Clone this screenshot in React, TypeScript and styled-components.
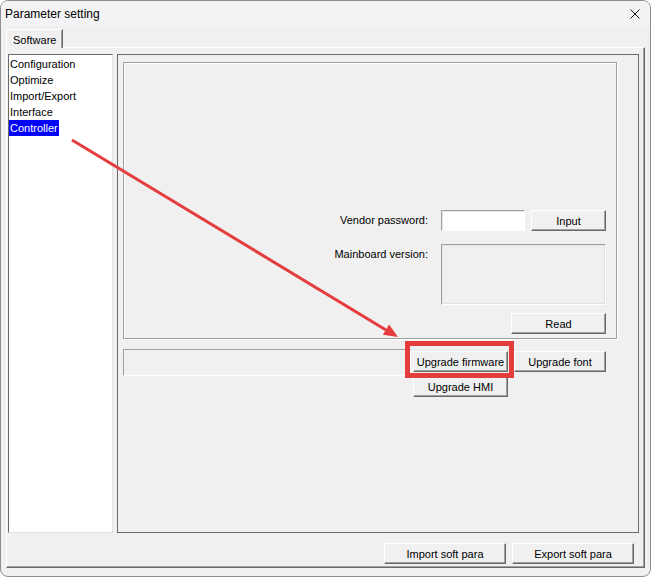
import React from "react";
import styled, { createGlobalStyle } from "styled-components";

const GlobalStyle = createGlobalStyle`
  html, body {
    margin: 0;
    padding: 0;
    background: #ffffff;
  }
  body {
    font-family: "Liberation Sans", Arial, sans-serif;
    font-size: 11px;
    color: #000;
  }
`;

// #region Styled components

const Window = styled.div`
  position: relative;
  width: 651px;
  height: 577px;
  box-sizing: border-box;
  border: 1px solid #8e8e8e;
  border-radius: 8px;
  background: #f0f0f0;
  overflow: hidden;
  display: flex;
  flex-direction: column;
`;

const TitleBar = styled.div`
  flex: none;
  height: 25px;
  background: #f3f3f6;
  display: flex;
  align-items: center;
  justify-content: space-between;
  padding: 0 10px 0 4px;
  font-size: 12px;
`;

const CloseButton = styled.div`
  width: 10px;
  height: 10px;
  display: flex;
`;

const Body = styled.div`
  flex: 1;
  display: flex;
  flex-direction: column;
  padding: 0 5px 8px 5px;
`;

const TabStrip = styled.div`
  flex: none;
  height: 21px;
  display: flex;
  align-items: flex-end;
`;

const Tab = styled.div`
  position: relative;
  z-index: 1;
  height: 19px;
  margin-bottom: -1px;
  box-sizing: border-box;
  padding: 1px 6px 0 6px;
  display: flex;
  align-items: center;
  background: #f0f0f0;
  border-top: 1px solid #fff;
  border-left: 1px solid #fff;
  border-right: 1px solid #696969;
  box-shadow: inset -1px 0 0 #a0a0a0;
`;

const TabPage = styled.div`
  flex: 1;
  display: flex;
  flex-direction: column;
  padding: 6px 5px 3px 1px;
  border-top: 1px solid #fff;
  border-left: 1px solid #fff;
  border-right: 1px solid #696969;
  border-bottom: 1px solid #696969;
  box-shadow: inset -1px -1px 0 #a0a0a0;
`;

const Content = styled.div`
  display: flex;
  gap: 4px;
  height: 479px;
`;

const ListBox = styled.div`
  width: 105px;
  flex: none;
  box-sizing: border-box;
  padding-top: 1px;
  background: #fff;
  border-top: 1px solid #696969;
  border-left: 1px solid #696969;
  border-right: 1px solid #e3e3e3;
  border-bottom: 1px solid #e3e3e3;
`;

const ListRow = styled.div`
  height: 16px;
  line-height: 16px;
`;

const ListText = styled.span<{ $selected?: boolean }>`
  display: inline-block;
  padding: 0 1px;
  background: ${(p) => (p.$selected ? "#0000ff" : "transparent")};
  color: ${(p) => (p.$selected ? "#fff" : "#000")};
`;

const GroupBox = styled.div`
  flex: 1;
  box-sizing: border-box;
  border: 1px solid #696969;
  padding: 7px 21px 0 5px;
  display: flex;
  flex-direction: column;
`;

const Panel = styled.div`
  height: 277px;
  box-sizing: border-box;
  border: 1px solid #a0a0a0;
  box-shadow: 1px 1px 0 #fff, inset 1px 1px 0 #fff;
  display: flex;
  flex-direction: column;
  justify-content: flex-end;
  align-items: flex-end;
  padding: 0 10px 4px 0;
`;

const FormRow = styled.div<{ $gapTop?: number }>`
  display: flex;
  align-items: flex-start;
  gap: 13px;
  margin-top: ${(p) => p.$gapTop ?? 0}px;
`;

const Label = styled.div<{ $tall?: boolean }>`
  text-align: right;
  line-height: ${(p) => (p.$tall ? "21px" : "16px")};
  padding-top: ${(p) => (p.$tall ? 0 : 2)}px;
`;

const FieldGroup = styled.div`
  display: flex;
  gap: 6px;
  width: 165px;
`;

const TextInput = styled.div`
  width: 84px;
  height: 21px;
  box-sizing: border-box;
  background: #fff;
  border-top: 1px solid #a0a0a0;
  border-left: 1px solid #a0a0a0;
  border-right: 1px solid #fff;
  border-bottom: 1px solid #fff;
  box-shadow: inset 1px 1px 0 #e3e3e3;
`;

const ReadonlyBox = styled.div`
  width: 165px;
  height: 61px;
  box-sizing: border-box;
  background: #f0f0f0;
  border-top: 1px solid #a0a0a0;
  border-left: 1px solid #a0a0a0;
  border-right: 1px solid #fff;
  border-bottom: 1px solid #fff;
  box-shadow: inset 1px 1px 0 #e3e3e3, inset -1px -1px 0 #e3e3e3;
`;

const Button = styled.div<{ $w: number }>`
  width: ${(p) => p.$w}px;
  height: 21px;
  flex: none;
  box-sizing: border-box;
  display: flex;
  align-items: center;
  justify-content: center;
  background: #f0f0f0;
  border-top: 1px solid #fff;
  border-left: 1px solid #fff;
  border-right: 1px solid #696969;
  border-bottom: 1px solid #696969;
  box-shadow: inset -1px -1px 0 #a0a0a0;
  white-space: nowrap;
`;

const Lower = styled.div`
  display: flex;
  margin-top: 10px;
  margin-right: 11px;
`;

const ProgressBox = styled.div`
  flex: 1;
  height: 27px;
  box-sizing: border-box;
  border-top: 1px solid #a0a0a0;
  border-left: 1px solid #a0a0a0;
  border-right: 1px solid #fff;
  border-bottom: 1px solid #fff;
`;

const UpgradeColumn = styled.div`
  margin: 2px 0 0 2px;
  display: flex;
  flex-direction: column;
  gap: 4px;
`;

const ButtonRow = styled.div`
  display: flex;
  gap: 6px;
`;

const Footer = styled.div`
  display: flex;
  justify-content: flex-end;
  gap: 6px;
  margin-top: 10px;
  padding-right: 5px;
`;

const Annotation = styled.svg`
  position: absolute;
  left: -1px;
  top: -1px;
  pointer-events: none;
`;

// #endregion

const items = ["Configuration", "Optimize", "Import/Export", "Interface", "Controller"];

const App = () => {
  return (
    <>
      <GlobalStyle />
      <Window>
        <TitleBar>
          <span>Parameter setting</span>
          <CloseButton>
            <svg width="10" height="10" viewBox="0 0 10 10">
              <path d="M0.5 0.5 L9.5 9.5 M9.5 0.5 L0.5 9.5" stroke="#111" strokeWidth="1" />
            </svg>
          </CloseButton>
        </TitleBar>
        <Body>
          <TabStrip>
            <Tab>Software</Tab>
          </TabStrip>
          <TabPage>
            <Content>
              <ListBox>
                {items.map((name) => (
                  <ListRow key={name}>
                    <ListText $selected={name === "Controller"}>{name}</ListText>
                  </ListRow>
                ))}
              </ListBox>
              <GroupBox>
                <Panel>
                  <FormRow>
                    <Label $tall>Vendor password:</Label>
                    <FieldGroup>
                      <TextInput />
                      <Button $w={75}>Input</Button>
                    </FieldGroup>
                  </FormRow>
                  <FormRow $gapTop={13}>
                    <Label>Mainboard version:</Label>
                    <ReadonlyBox />
                  </FormRow>
                  <FormRow $gapTop={8}>
                    <Button $w={95}>Read</Button>
                  </FormRow>
                </Panel>
                <Lower>
                  <ProgressBox />
                  <UpgradeColumn>
                    <ButtonRow>
                      <Button $w={95}>Upgrade firmware</Button>
                      <Button $w={92}>Upgrade font</Button>
                    </ButtonRow>
                    <Button $w={95}>Upgrade HMI</Button>
                  </UpgradeColumn>
                </Lower>
              </GroupBox>
            </Content>
            <Footer>
              <Button $w={122}>Import soft para</Button>
              <Button $w={122}>Export soft para</Button>
            </Footer>
          </TabPage>
        </Body>
        <Annotation width="651" height="577" viewBox="0 0 651 577">
          <line x1="72" y1="140" x2="386" y2="330" stroke="#e53d3d" strokeWidth="3" />
          <polygon points="398,337 382.9,334.8 389.1,324.6" fill="#e53d3d" />
          <rect x="407.5" y="343.5" width="104" height="32" fill="none" stroke="#e53d3d" strokeWidth="5" />
        </Annotation>
      </Window>
    </>
  );
};

export default App;
